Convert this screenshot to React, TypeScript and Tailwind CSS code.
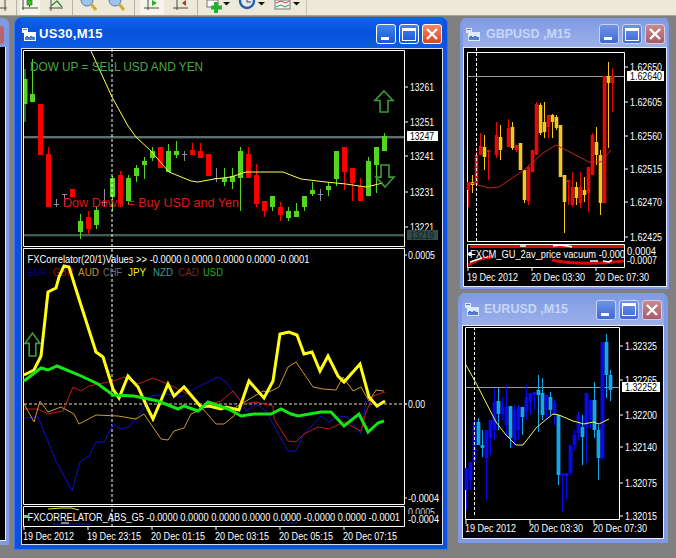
import type { ReactNode } from "react";

type Candle = [number, number, number, number, number, number];

const FONT = "'Liberation Sans', Arial, sans-serif";

// x, body top, body bottom, wick top, wick bottom, kind (0 bull, 1 bear, 2 doji)
const us30: Candle[] = [
  [24, 80, 105, 70, 123, 0], [31.5, 95, 103, 60, 103, 0], [39.5, 105, 156, 105, 156, 1], [47.5, 155, 208, 148, 208, 1],
  [55.5, 205, 205, 200, 208, 2], [63.5, 195, 195, 195, 207, 2], [71.5, 190, 198, 190, 198, 1], [79.5, 222, 233, 215, 240, 0],
  [87.5, 218, 230, 212, 235, 1], [95.5, 211, 226, 208, 230, 0], [103.5, 203, 203, 190, 207, 2], [111.5, 179, 198, 177, 212, 0],
  [119.5, 176, 205, 172, 208, 1], [127.5, 179, 202, 176, 205, 0], [135.5, 169, 177, 166, 183, 0], [143.5, 162, 166, 158, 180, 0],
  [151.5, 152, 159, 148, 162, 0], [159.5, 148, 169, 148, 169, 1], [167.5, 152, 173, 145, 173, 0], [175.5, 152, 156, 142, 159, 0],
  [183.5, 155, 155, 152, 162, 2], [191.5, 151, 156, 144, 156, 1], [199.5, 152, 159, 144, 159, 1], [207.5, 155, 177, 155, 177, 1],
  [215.5, 179, 179, 169, 183, 2], [223.5, 179, 183, 169, 187, 0], [231.5, 177, 183, 169, 190, 0], [239.5, 152, 179, 148, 212, 0],
  [247.5, 155, 179, 148, 179, 1], [255.5, 176, 205, 165, 208, 1], [263.5, 202, 212, 202, 218, 1], [271.5, 197, 208, 197, 212, 0],
  [279.5, 208, 216, 203, 222, 1], [287.5, 212, 219, 208, 222, 0], [295.5, 212, 218, 204, 218, 0], [303.5, 197, 208, 197, 212, 0],
  [311.5, 191, 195, 183, 197, 0], [319.5, 195, 195, 190, 202, 2], [327.5, 187, 191, 183, 197, 0], [335.5, 152, 180, 152, 187, 0],
  [343.5, 148, 173, 148, 191, 1], [351.5, 169, 184, 169, 202, 1], [359.5, 187, 202, 179, 202, 1], [367.5, 162, 197, 158, 197, 0],
  [375.5, 148, 166, 148, 194, 0], [383.5, 137, 152, 134, 152, 0],
];

const gbpusd: Candle[] = [
  [468.5, 182, 190, 182, 207, 1], [472.5, 182, 185, 175, 193, 0], [476.5, 155, 185, 152, 187, 1], [480.5, 146, 155, 133, 155, 1],
  [484.5, 147, 157, 135, 170, 0], [488.5, 150, 152, 150, 180, 1], [496.5, 135, 155, 122, 158, 1], [500.5, 137, 150, 125, 160, 0],
  [508.5, 128, 147, 119, 147, 1], [512.5, 127, 148, 122, 150, 0], [516.5, 145, 150, 145, 152, 1], [520.5, 143, 170, 143, 170, 0],
  [524.5, 170, 200, 170, 203, 0], [528.5, 167, 201, 165, 205, 1], [532.5, 150, 172, 150, 172, 1], [536.5, 104, 155, 102, 155, 1],
  [540.5, 105, 133, 103, 135, 0], [544.5, 122, 132, 102, 138, 0], [548.5, 115, 127, 115, 138, 1], [552.5, 115, 122, 114, 138, 0],
  [556.5, 117, 128, 115, 130, 0], [560.5, 125, 177, 125, 177, 0], [564.5, 175, 202, 175, 233, 0], [568.5, 180, 182, 180, 205, 1],
  [572.5, 187, 205, 172, 207, 1], [576.5, 187, 198, 182, 205, 0], [580.5, 187, 203, 172, 208, 1], [584.5, 190, 195, 177, 202, 0],
  [588.5, 167, 193, 167, 212, 1], [592.5, 135, 175, 133, 175, 1], [596.5, 142, 155, 127, 165, 0], [600.5, 155, 203, 150, 215, 0],
  [604.5, 76, 203, 76, 203, 1], [608.5, 76, 83, 62, 148, 0], [612.5, 76, 83, 68, 112, 1],
];

const eurusd: Candle[] = [
  [466.5, 468, 490, 468, 510, 1], [470.5, 462, 480, 462, 490, 1], [474.5, 422, 462, 420, 462, 1], [478.5, 422, 445, 418, 445, 0],
  [482.5, 445, 448, 430, 457, 0], [486.5, 430, 458, 430, 500, 1], [490.5, 420, 438, 420, 455, 1], [494.5, 402, 430, 388, 440, 1],
  [498.5, 401, 414, 388, 430, 0], [502.5, 407, 414, 397, 420, 1], [506.5, 407, 425, 385, 435, 1], [510.5, 406, 438, 406, 448, 0],
  [514.5, 410, 440, 405, 445, 1], [518.5, 407, 430, 405, 440, 1], [522.5, 407, 417, 407, 435, 0], [526.5, 397, 412, 385, 420, 1],
  [530.5, 393, 402, 393, 415, 1], [534.5, 392, 395, 392, 410, 1], [538.5, 390, 395, 375, 432, 0], [542.5, 393, 415, 378, 420, 0],
  [546.5, 395, 410, 395, 420, 1], [550.5, 397, 410, 392, 415, 0], [554.5, 403, 415, 400, 425, 1], [558.5, 415, 475, 415, 485, 0],
  [562.5, 473, 476, 473, 512, 1], [566.5, 473, 476, 473, 500, 1], [570.5, 445, 473, 445, 475, 1], [574.5, 435, 445, 430, 450, 1],
  [578.5, 415, 433, 412, 440, 1], [582.5, 427, 437, 415, 465, 0], [586.5, 393, 428, 393, 463, 1], [590.5, 400, 420, 400, 428, 1],
  [594.5, 400, 430, 382, 438, 0], [598.5, 430, 458, 425, 480, 0], [602.5, 342, 458, 342, 460, 1], [606.5, 342, 375, 334, 398, 0],
  [610.5, 375, 390, 370, 401, 0],
];

const yellowLine = "23,376 33,371 40,357 47,293 55,289 58,278 63,267 68,268 78,300 95,353 102,358 112,390 118,399 127,377 137,388 147,410 152,420 167,385 173,397 183,388 200,408 208,407 220,410 225,408 238,411 248,382 263,399 272,382 279,335 288,333 296,336 303,355 311,353 319,372 327,357 337,377 343,383 359,365 368,398 376,407 384,402";
const greenLine = "23,382 40,369 47,371 56,367 78,376 97,385 112,396 133,397 157,402 177,410 183,407 197,412 207,403 227,410 233,413 240,417 253,415 270,415 280,410 290,415 297,417 320,413 330,413 343,427 358,415 367,433 377,424 383,422";
const blueLine = "23,419 37,418 55,462 71,492 79,463 88,457 95,443 103,443 112,425 120,430 128,428 140,413 150,397 167,395 180,398 197,388 217,378 225,383 238,400 245,412 255,405 265,412 273,427 287,452 295,452 303,435 320,417 328,423 337,417 347,418 360,435 365,402 372,405 380,410";
const redLine = "23,410 37,410 47,415 62,412 72,388 80,392 88,387 97,385 113,382 123,378 137,385 152,379 167,385 187,395 200,408 220,402 232,392 242,405 255,403 272,407 273,420 287,442 295,443 303,435 317,428 328,430 343,423 360,432 365,413 372,397 384,393";
const orangeLine = "23,405 33,423 39,402 47,413 60,408 73,415 78,425 95,416 117,417 135,420 143,415 160,440 167,441 173,432 183,429 190,415 202,410 215,425 223,425 233,417 235,408 262,392 268,393 278,388 287,368 295,363 312,388 322,390 335,391 342,378 352,392 360,388 368,402 375,391 383,392";

function Txt({ x, y, w, fill = "#fff", size = 10, children }: { x: number; y: number; w: number; fill?: string; size?: number; children: ReactNode }) {
  return (
    <text x={x} y={y + size * 0.42} fontSize={size} fontFamily={FONT} fill={fill} textLength={w} lengthAdjust="spacingAndGlyphs">
      {children}
    </text>
  );
}

function Candles({ data, width, colors }: { data: Candle[]; width: number; colors: string[] }) {
  return (
    <g>
      {data.map(([x, top, bottom, wickTop, wickBottom, kind], i) => (
        <g key={i}>
          <rect x={x - 0.5} y={wickTop} width={1} height={wickBottom - wickTop} fill={colors[kind]} />
          {kind === 2 ? (
            <rect x={x - width / 2} y={top} width={width} height={1} fill={colors[2]} />
          ) : (
            <rect x={x - width / 2} y={top} width={width} height={bottom - top} fill={colors[kind]} />
          )}
        </g>
      ))}
    </g>
  );
}

function Arrow({ x, y, w, h, up }: { x: number; y: number; w: number; h: number; up: boolean }) {
  const m = x + w / 2;
  const a = x + w * 0.28;
  const b = x + w * 0.72;
  const pts = up
    ? `${m},${y} ${x + w},${y + h * 0.45} ${b},${y + h * 0.45} ${b},${y + h} ${a},${y + h} ${a},${y + h * 0.45} ${x},${y + h * 0.45}`
    : `${m},${y + h} ${x + w},${y + h * 0.55} ${b},${y + h * 0.55} ${b},${y} ${a},${y} ${a},${y + h * 0.55} ${x},${y + h * 0.55}`;
  return <polygon points={pts} fill="none" stroke="#3f9a3f" strokeWidth="1.6" />;
}

function WinIcon({ pale }: { pale?: boolean }) {
  const c = pale ? "#dfe7fa" : "#ffffff";
  return (
    <svg width="14" height="13" viewBox="0 0 14 13" className="shrink-0">
      <rect x="0" y="0" width="6" height="5" fill={c} />
      <rect x="2" y="4" width="12" height="9" fill={c} />
      <rect x="3" y="9" width="10" height="3" fill="#4f7fd8" />
      <path d="M3 10 L5 8 L7 10 L9 8 L12 10" stroke="#3a66c0" fill="none" />
      <rect x="1" y="1" width="4" height="1" fill="#4f7fd8" />
    </svg>
  );
}

function WinButtons({ active, gapClass }: { active: boolean; gapClass: string }) {
  const btn = active
    ? "bg-gradient-to-b from-[#3f86ef] to-[#1a55d8] border-white"
    : "bg-gradient-to-b from-[#6f93e6] to-[#4069d2] border-[#c5d3f5]";
  const close = active
    ? "bg-gradient-to-b from-[#f08a66] to-[#d8401c] border-white"
    : "bg-gradient-to-b from-[#c88a8e] to-[#a85a68] border-[#d5cbe0]";
  const box = "w-[20px] h-[20px] rounded-[3px] border flex relative";
  return (
    <div className={`flex ${gapClass}`}>
      <div className={`${box} ${btn} items-end pl-[4px] pb-[3px]`}>
        <div className="w-[8px] h-[3px] bg-white" />
      </div>
      <div className={`${box} ${btn} items-center justify-center`}>
        <div className="w-[14px] h-[13px] border border-white border-t-[3px]" />
      </div>
      <div className={`${box} ${close} items-center justify-center`}>
        <svg width="14" height="14" viewBox="0 0 14 14">
          <path d="M2 2 L12 12 M12 2 L2 12" stroke="#fff" strokeWidth="2.4" />
        </svg>
      </div>
    </div>
  );
}

function Window(props: {
  title: string;
  active: boolean;
  frame: string;
  bar: string;
  titleText: string;
  gapClass: string;
  barPad: string;
  client: string;
  children: ReactNode;
}) {
  return (
    <div className={`absolute flex flex-col rounded-t-[7px] ${props.frame}`}>
      <div className={`flex items-center shrink-0 ${props.bar} ${props.barPad}`}>
        <WinIcon pale={!props.active} />
        <div className={`font-bold flex-1 whitespace-nowrap ${props.titleText}`} style={{ fontFamily: FONT }}>
          {props.title}
        </div>
        <WinButtons active={props.active} gapClass={props.gapClass} />
      </div>
      <div className={`bg-black border ${props.client}`}>{props.children}</div>
    </div>
  );
}

function Toolbar() {
  const axis = "#4a4a40";
  return (
    <div className="h-[16px] shrink-0 bg-[#ece9d8] border-b border-[#a5a296] flex items-start">
      <svg width="16" height="15" viewBox="0 0 16 15" className="shrink-0">
        <path d="M0 8 H7 M5 0 V11" stroke={axis} fill="none" />
      </svg>
      <div className="w-px h-[15px] bg-[#b5b2a4] shrink-0" />
      <svg width="55" height="15" viewBox="17 0 55 15" className="shrink-0">
        <rect x="20" y="0" width="20" height="15" fill="#f6f4ec" />
        <path d="M23 0 V10 M22 8 H38" stroke={axis} fill="none" />
        <rect x="27" y="0" width="5" height="5" fill="#3cc01c" stroke="#207010" strokeWidth=".6" />
        <path d="M29.5 5 V7" stroke="#207010" />
        <path d="M51 0 V11 M49 8 H63" stroke={axis} fill="none" />
        <path d="M51 6 L57 1 L62 7" stroke="#2f8f3a" fill="none" strokeWidth="1.3" />
      </svg>
      <div className="w-px h-[15px] bg-[#b5b2a4] shrink-0" />
      <svg width="61" height="15" viewBox="73 0 61 15" className="shrink-0">
        <circle cx="87" cy="0" r="6" fill="#9cc4ee" stroke="#5a7ca8" />
        <path d="M91 4 L96 10" stroke="#d4a93c" strokeWidth="3" />
        <circle cx="115" cy="0" r="6" fill="#9cc4ee" stroke="#5a7ca8" />
        <path d="M119 4 L124 10" stroke="#d4a93c" strokeWidth="3" />
      </svg>
      <div className="w-px h-[15px] bg-[#b5b2a4] shrink-0" />
      <svg width="62" height="15" viewBox="135 0 62 15" className="shrink-0">
        <rect x="140" y="0" width="24" height="15" fill="#f6f4ec" />
        <path d="M148 0 V10 M144 8 H159" stroke={axis} fill="none" />
        <path d="M152 0 L157 3 L152 6 Z" fill="#28b028" />
        <path d="M177 0 V10 M173 8 H188" stroke={axis} fill="none" />
        <path d="M186 0 L182 3 L186 6 Z" fill="#c03020" />
      </svg>
      <div className="w-px h-[15px] bg-[#b5b2a4] shrink-0" />
      <svg width="108" height="15" viewBox="198 0 108 15" className="shrink-0">
        <rect x="207" y="0" width="11" height="7" fill="#fff" stroke="#777" />
        <path d="M216 2 V13 M211 7.5 H222" stroke="#22b030" strokeWidth="4" />
        <path d="M223 2 H230 L226.5 5.5 Z" fill="#111" />
        <circle cx="247" cy="1" r="7" fill="#e8e8ee" stroke="#2060b8" strokeWidth="2.4" />
        <path d="M247 -2 V2 H251" stroke="#444" fill="none" />
        <path d="M258 2 H265 L261.5 5.5 Z" fill="#111" />
        <rect x="275" y="0" width="15" height="9" fill="#f2f2f2" stroke="#778" />
        <path d="M276 3 L281 1 L286 3 L289 1" stroke="#c04030" fill="none" />
        <path d="M276 7 L281 5 L285 7 L289 5" stroke="#2c9a40" fill="none" />
        <path d="M293 2 H300 L296.5 5.5 Z" fill="#111" />
      </svg>
      <div className="w-px h-[15px] bg-[#c5c2b4] shrink-0" />
    </div>
  );
}

function MainChart() {
  const prices: [string, number][] = [["13261", 88], ["13251", 123], ["13241", 157], ["13231", 193], ["13221", 228]];
  const dates: [string, number][] = [["19 Dec 23:15", 86], ["20 Dec 01:15", 150], ["20 Dec 03:15", 214], ["20 Dec 05:15", 278], ["20 Dec 07:15", 342]];
  const legend: [string, number, number, string][] = [
    ["EUR", 27, 19, "#00008b"], ["GBP", 52, 20, "#a81010"], ["AUD", 77, 21, "#c8922e"], ["CHF", 102, 19, "#707070"],
    ["JPY", 127, 18, "#f0f020"], ["NZD", 152, 20, "#3f9f90"], ["CAD", 177, 21, "#7a2424"], ["USD", 202, 20, "#18b018"],
  ];
  return (
    <svg width="422" height="495" viewBox="21 50 422 495" className="block">
      <defs>
        <clipPath id="mainPane"><rect x="23" y="52" width="380" height="195" /></clipPath>
      </defs>
      <path d="M22.5 51.5 H403.5 V247.5 H22.5 Z M22.5 249.5 H403.5 V505.5 H22.5 Z M22.5 507.5 H403.5 V527.5 H22.5 Z" fill="none" stroke="#fff" />
      <rect x="23" y="137" width="380" height="2.4" fill="#5f6f6f" />
      <rect x="23" y="235" width="380" height="2.4" fill="#425a55" />
      <g clipPath="url(#mainPane)">
        <Candles data={us30} width={5} colors={["#55d522", "#fa0000", "#8a8aa0"]} />
        <polyline points="90,52 111,98 127,127 135,138 150,152 168,173 190,182 197,183 213,180 230,178 245,173 268,173 282,173 300,180 325,183 345,185 365,188 382,184" fill="none" stroke="#ffff50" />
      </g>
      <path d="M111 50 V527" stroke="#fff" strokeDasharray="3 2" />
      <Arrow x={374} y={92} w={18} h={21} up />
      <Arrow x={375} y={166} w={18} h={22} up={false} />
      <Arrow x={24} y={334} w={15} h={23} up />
      <Txt x={29} y={67} w={173} size={12} fill="#4aa84a">DOW UP = SELL USD AND YEN</Txt>
      <Txt x={62} y={203} w={176} size={12} fill="#dc1a1a">Dow Down = Buy USD and Yen</Txt>

      <path d="M404 88 H407 M404 123 H407 M404 157 H407 M404 193 H407 M404 228 H407 M404 256 H406 M404 405 H406 M404 499 H406" stroke="#fff" />
      {prices.map(([p, y]) => (
        <Txt key={p} x={409} y={y} w={24}>{p}</Txt>
      ))}
      <rect x="406" y="231" width="31" height="10" fill="#2f4b4a" />
      <Txt x={409} y={236} w={24} fill="#0f1f1f">13219</Txt>
      <rect x="406" y="132" width="31" height="10" fill="#fff" />
      <Txt x={409} y={137} w={24} fill="#000">13247</Txt>

      <Txt x={26.5} y={260} w={282}>FXCorrelator(20/1)Values &gt;&gt; -0.0000 0.0000 0.0000 0.0000 -0.0001</Txt>
      {legend.map(([n, x, w, c]) => (
        <Txt key={n} x={x} y={273} w={w} fill={c}>{n}</Txt>
      ))}
      <path d="M23 405 H406" stroke="#e8d8b8" strokeDasharray="3 2" />
      <polyline points={blueLine} fill="none" stroke="#1010c8" />
      <polyline points={redLine} fill="none" stroke="#c81818" />
      <polyline points={orangeLine} fill="none" stroke="#cf9832" />
      <polyline points={yellowLine} fill="none" stroke="#ffff14" strokeWidth="3" />
      <polyline points={greenLine} fill="none" stroke="#14e614" strokeWidth="3" />
      <Txt x={407} y={256} w={27}>0.0005</Txt>
      <Txt x={407} y={405} w={17}>0.00</Txt>
      <Txt x={407} y={499} w={31}>-0.0004</Txt>

      <path d="M47 510 L60 509 L70 509 L78 511" fill="none" stroke="#e8e820" />
      <path d="M52 525 H90" stroke="#1818b0" />
      <path d="M60 524 H68" stroke="#fff" />
      <path d="M283 524 H297" stroke="#1818b0" />
      <rect x="23" y="516" width="4" height="3" fill="#8ac858" />
      <Txt x={26.5} y={518} w={372.5}>FXCORRELATOR_ABS_G5 -0.0000 0.0000 0.0000 0.0000 0.0000 -0.0000 0.0000 -0.0001</Txt>
      <Txt x={407} y={513} w={27} fill="#ccc">0.0005</Txt>
      <rect x="405" y="515" width="36" height="10" fill="#000" />
      <Txt x={407} y={520} w={31}>-0.0004</Txt>
      <path d="M23 527 V531 M87 527 V531 M151 527 V531 M215 527 V531 M279 527 V531 M343 527 V531" stroke="#fff" />
      <Txt x={22} y={537} w={51}>19 Dec 2012</Txt>
      {dates.map(([d, x]) => (
        <Txt key={d} x={x} y={537} w={54}>{d}</Txt>
      ))}
    </svg>
  );
}

function GbpChart() {
  const prices: [string, number][] = [["1.62650", 67], ["1.62605", 102], ["1.62560", 136], ["1.62515", 169], ["1.62470", 202], ["1.62425", 237]];
  return (
    <svg width="202" height="238" viewBox="464 48 202 238" className="block">
      <defs>
        <clipPath id="gbpSub"><rect x="468" y="245" width="156" height="22" /></clipPath>
      </defs>
      <path d="M467.5 52.5 H624.5 V241.5 H467.5 Z M467.5 244.5 H624.5 V267.5 H467.5 Z" fill="none" stroke="#fff" />
      <rect x="468" y="76" width="156" height="1" fill="#9a9a9a" />
      <Candles data={gbpusd} width={3.6} colors={["#f8c818", "#e80808", "#c08080"]} />
      <polyline points="468,185 471,183 489,188 499,187 524,170 543,153 556,145 566,150 589,162 601,162 611,150" fill="none" stroke="#c02424" />
      <path d="M476.5 48 V241" stroke="#fff" strokeDasharray="3 2" />
      <g clipPath="url(#gbpSub)">
        <path d="M470 246.5 H624" stroke="#e00808" strokeWidth="3" />
        <path d="M468 265 L480 259 L492 257" stroke="#d80808" strokeWidth="3" fill="none" />
        <path d="M470 262 L482 258" stroke="#fff" strokeWidth="1.4" />
        <path d="M552 260 Q580 266 624 261" stroke="#d80808" strokeWidth="3" fill="none" />
        <path d="M553 246 Q562 244 572 247 M590 261 H598 M603 261 L609 262 L612 260 M520 246 H526" stroke="#fff" strokeWidth="1.6" fill="none" />
      </g>
      <circle cx="470" cy="254" r="2" fill="#fff" />
      <Txt x={470} y={254} w={155}>FXCM_GU_2av_price vacuum -0.000</Txt>
      <path d="M625 67 H628 M625 102 H628 M625 136 H628 M625 169 H628 M625 202 H628 M625 237 H628" stroke="#fff" />
      {prices.map(([p, y]) => (
        <Txt key={p} x={630} y={y} w={32}>{p}</Txt>
      ))}
      <rect x="627" y="71" width="37" height="10" fill="#fff" />
      <Txt x={630} y={76} w={32} fill="#000">1.62640</Txt>
      <Txt x={627} y={251} w={29}>0.0004</Txt>
      <Txt x={627} y={260} w={30}>-0.0007</Txt>
      <path d="M468 267 V271 M532 267 V271 M596 267 V271" stroke="#fff" />
      <Txt x={467} y={277} w={51}>19 Dec 2012</Txt>
      <Txt x={531} y={277} w={54}>20 Dec 03:30</Txt>
      <Txt x={595} y={277} w={54}>20 Dec 07:30</Txt>
    </svg>
  );
}

function EurChart() {
  const prices: [string, number][] = [["1.32325", 346], ["1.32265", 380], ["1.32200", 415], ["1.32140", 447], ["1.32075", 483], ["1.32015", 516]];
  return (
    <svg width="200" height="212" viewBox="463 326 200 212" className="block">
      <path d="M465.5 327.5 H619.5 V519.5 H465.5 Z" fill="none" stroke="#fff" />
      <rect x="466" y="387" width="153" height="1" fill="#9a9a9a" />
      <Candles data={eurusd} width={3.8} colors={["#12a8ea", "#0808ee", "#8080c0"]} />
      <polyline points="466,365 476,383 496,422 506,435 516,445 523,445 536,428 543,422 553,414 559,415 573,421 584,424 593,422 599,424 609,419" fill="none" stroke="#f4f460" />
      <path d="M474.5 327 V516" stroke="#fff" strokeDasharray="3 2" />
      <path d="M620 346 H623 M620 380 H623 M620 415 H623 M620 447 H623 M620 483 H623 M620 516 H623" stroke="#fff" />
      {prices.map(([p, y]) => (
        <Txt key={p} x={625} y={y} w={32}>{p}</Txt>
      ))}
      <rect x="622" y="382" width="38" height="10" fill="#fff" />
      <Txt x={625} y={387} w={32} fill="#000">1.32252</Txt>
      <path d="M466 520 V524 M530 520 V524 M594 520 V524" stroke="#fff" />
      <Txt x={465} y={528} w={51}>19 Dec 2012</Txt>
      <Txt x={529} y={528} w={54}>20 Dec 03:30</Txt>
      <Txt x={593} y={528} w={54}>20 Dec 07:30</Txt>
    </svg>
  );
}

export default function App() {
  return (
    <div className="w-[676px] h-[558px] overflow-hidden flex flex-col bg-[#808080]">
      <Toolbar />
      <div className="relative flex-1">
        {/* window left of the active one, mostly hidden */}
        <div className="absolute left-0 top-[2px] w-[9px] h-[527px] flex flex-col rounded-tr-[6px] bg-[#8299e2]">
          <div className="h-[29px] shrink-0 pt-[8px]">
            <div className="w-[4px] h-[18px] rounded-r-[3px] bg-[#b8646c]" />
          </div>
          <div className="flex-1 w-[6px] mb-[4px] bg-black border-r border-b border-[#e4e8f8]" />
        </div>

        <Window
          title="US30,M15"
          active
          frame="left-[14px] top-[1px] w-[434px] h-[533px] pl-[6px] pr-[4px] pb-[4px] border border-[#3a78ee] bg-[#0c52e2]"
          bar="h-[31px] -mt-px"
          barPad="pl-[1px] pr-[1px] gap-[3px] pt-[3px] bg-gradient-to-b from-[#1064e6] via-[#0852dc] to-[#0c5ce6]"
          titleText="text-[13px] tracking-[0.3px] text-white"
          gapClass="gap-[3px]"
          client="border-[#d4dcf4]"
        >
          <MainChart />
        </Window>

        <Window
          title="GBPUSD ,M15"
          active={false}
          frame="left-[460px] top-[2px] w-[209px] h-[271px] pl-[3px] pr-[2px] pb-[2px] bg-[#7f9ae4]"
          bar="h-[29px]"
          barPad="pl-[3px] pr-[2px] gap-[6px] pt-[3px] bg-gradient-to-b from-[#7f9ae4] to-[#9cb0ea]"
          titleText="text-[12.5px] text-[#c8d6f6]"
          gapClass="gap-[3px]"
          client="border-[#e8ecfa]"
        >
          <GbpChart />
        </Window>

        <Window
          title="EURUSD ,M15"
          active={false}
          frame="left-[458px] top-[277px] w-[210px] h-[250px] pl-[4px] pr-[4px] pb-[4px] bg-[#7f9ae4]"
          bar="h-[32px]"
          barPad="pl-[3px] pr-[2px] gap-[5px] pt-[1px] bg-gradient-to-b from-[#7f9ae4] to-[#9cb0ea]"
          titleText="text-[12.5px] text-[#c8d6f6]"
          gapClass="gap-[3px]"
          client="border-[#e8ecfa]"
        >
          <EurChart />
        </Window>
      </div>
    </div>
  );
}
